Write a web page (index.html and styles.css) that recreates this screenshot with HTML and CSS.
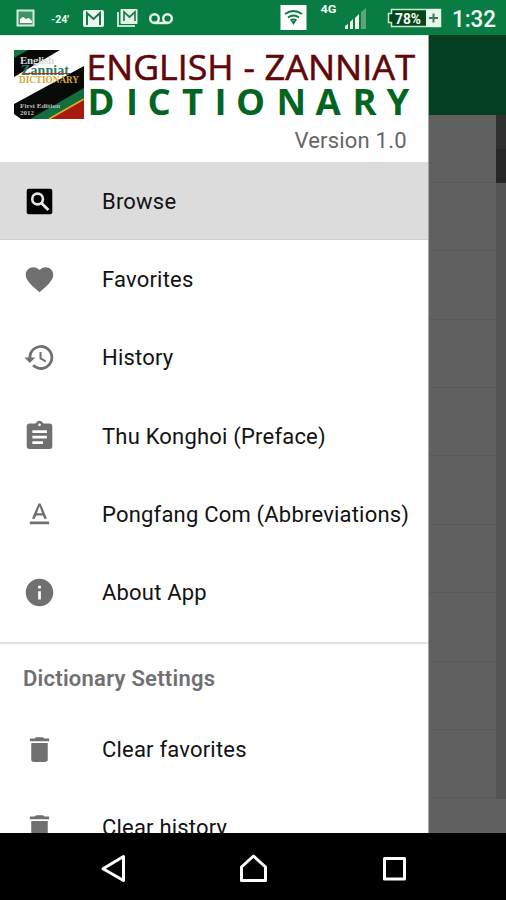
FILE: index.html
```html
<!DOCTYPE html>
<html lang="en">
<head>
<meta charset="utf-8">
<title>English - Zanniat Dictionary</title>
<link rel="stylesheet" href="styles.css">
</head>
<body>
<div class="phone">
  <header class="status">
    <svg class="notifications" viewBox="0 0 180 35" width="180" height="35">
      <rect x="17.5" y="10.500" width="16" height="15" fill="#3d9461" stroke="#d4ead9" stroke-width="2"/>
      <path d="M20 23v-4l3-2 3 2 3-1 3 3v2z" fill="#fff"/>
      <text x="51" y="22.5" class="temp" textLength="18" lengthAdjust="spacingAndGlyphs">-24'</text>
      <rect x="83" y="10" width="21" height="17" rx="2" fill="#e9f7ec"/>
      <path d="M87 25V13l6.500 6L100 13v12" fill="none" stroke="#16794a" stroke-width="2"/>
      <path d="M118 12v14h17" fill="none" stroke="#c1e3cb" stroke-width="2"/>
      <rect x="120.500" y="9" width="17" height="15" rx="1" fill="#e2f4e6"/>
      <path d="M124 21v-9l5.500 5 5.500-5v9" fill="none" stroke="#277d50" stroke-width="1.700"/>
      <g fill="none" stroke="#e4f5e8" stroke-width="2.400"><circle cx="154.500" cy="18.500" r="4.300"/><circle cx="167.500" cy="18.500" r="4.300"/><path d="M154 23h14"/></g>
    </svg>
    <svg class="indicators" viewBox="270 0 236 35" width="236" height="35">
      <rect x="280.500" y="5" width="26" height="25" fill="#fff"/>
      <g fill="none" stroke="#087c43" stroke-width="1.900"><path d="M285 14q8.500-6 17 0M288 17.500q5.500-4 11 0M290.500 20.500q3-2 6 0"/></g>
      <path d="M291 21h5l-2.500 4z" fill="#087c43"/>
      <text x="320.500" y="12.500" class="net" textLength="16" lengthAdjust="spacingAndGlyphs">4G</text>
      <path d="M345 29v-3l3-2v5zm5 0v-7l3-3v10zm5 0V18l4-4v15z" fill="#effbf1"/>
      <path d="M361 29V12l5-4v21z" fill="#59a778"/>
      <path d="M391.500 9.500h49v17h-49v-4h-3v-9h3z" fill="#07461d" stroke="#c9e8cc" stroke-width="1.500"/>
      <path d="M426 9h15v18h-15z" fill="#e7f7e9"/>
      <path d="M433.500 13.500v9M429 18h9" stroke="#397b52" stroke-width="2"/>
      <text x="395" y="23.500" class="battery" textLength="26" lengthAdjust="spacingAndGlyphs">78%</text>
      <text x="452" y="26.500" class="clock" textLength="44" lengthAdjust="spacingAndGlyphs">1:32</text>
    </svg>
  </header>

  <main class="screen">
    <nav class="drawer">
      <div class="brand">
        <svg viewBox="0 0 428 126" width="428" height="126">
          <g class="cover">
            <path fill="#fff" d="M14 15h70v69H14z"/>
            <path fill="#080a08" d="M14 15h46L14 42z"/>
            <path fill="#12783e" d="M14 15h14L14 23z"/>
            <path fill="#126d3f" d="M14 84l70-38v38z"/>
            <path fill="#080a08" d="M14 69l70-38v25L33 84H14z"/>
            <path fill="#fff" d="M14 79v5h7z"/>
            <path fill="#126d3f" d="M30 84l54-31v14L50 84z"/>
            <path fill="#a81910" d="M49 84l35-20v20z"/>
            <path fill="none" stroke="#e2ae25" stroke-width="1.500" d="M49 84l35-20"/>
            <text x="20" y="29" class="cover-old" textLength="34">English</text>
            <text x="21" y="39.500" class="cover-zanniat" textLength="48">Zanniat</text>
            <path d="M22 38.500h48" stroke="#ad3229" stroke-width="1"/>
            <text x="19" y="47.500" class="cover-dict" textLength="60" lengthAdjust="spacingAndGlyphs">DICTIONARY</text>
            <text x="20" y="73" class="cover-small" textLength="40" lengthAdjust="spacingAndGlyphs">First Edition</text>
            <text x="20" y="79.500" class="cover-small" textLength="14" lengthAdjust="spacingAndGlyphs">2012</text>
          </g>
          <text x="86.500" y="45" class="title" textLength="147" lengthAdjust="spacingAndGlyphs">ENGLISH</text>
          <text x="243.500" y="45" class="title">-</text>
          <text x="264.500" y="45" class="title" textLength="150.500" lengthAdjust="spacingAndGlyphs">ZANNIAT</text>
          <text y="79.500" class="subtitle"><tspan x="87.500 126 147.500 182 214.500 236 276.500 315.500 352.500 386.500">DICTIONARY</tspan></text>
          <text x="294.500" y="112.500" class="version" textLength="112">Version 1.0</text>
        </svg>
      </div>

      <ul class="menu">
        <li class="item selected">
          <svg class="icon" viewBox="0 0 24 24"><rect x="2.700" y="2.700" width="18.600" height="18.600" rx="1.500" fill="#000"/><circle cx="10.600" cy="10.200" r="3.900" fill="none" stroke="#e6e6e6" stroke-width="1.900"/><path d="M13.500 13.200l5 5" stroke="#e6e6e6" stroke-width="2.100"/></svg>
          <span>Browse</span>
        </li>
        <li class="item">
          <svg class="icon" viewBox="0 0 24 24"><path d="M12 21.350l-1.450-1.320C5.400 15.360 2 12.280 2 8.500 2 5.420 4.420 3 7.500 3c1.740 0 3.410.810 4.500 2.090C13.090 3.810 14.760 3 16.500 3 19.580 3 22 5.420 22 8.500c0 3.780-3.400 6.860-8.550 11.540L12 21.350z"/></svg>
          <span>Favorites</span>
        </li>
        <li class="item">
          <svg class="icon" viewBox="0 0 24 24"><path d="M13 3a9 9 0 0 0-9 9H1l3.890 3.890.07.140L9 12H6a7 7 0 1 1 2.060 4.940l-1.420 1.420A9 9 0 1 0 13 3zm-1 5v5l4.280 2.540.720-1.210-3.500-2.080V8H12z"/></svg>
          <span>History</span>
        </li>
        <li class="item">
          <svg class="icon" viewBox="0 0 24 24"><path transform="translate(0 -.5)" d="M19.300 3h-4.480a3 3 0 0 0-5.640 0H4.700a2 2 0 0 0-2 2v14.500a2 2 0 0 0 2 2h14.600a2 2 0 0 0 2-2V5a2 2 0 0 0-2-2zM12 3a1 1 0 1 1 0 2 1 1 0 0 1 0-2zm2.500 15H6.800v-2h7.700v2zm2.900-4H6.800v-2h10.600v2zm0-4H6.800V8h10.600v2z"/></svg>
          <span>Thu Konghoi (Preface)</span>
        </li>
        <li class="item">
          <svg class="icon" viewBox="0 0 24 24"><path d="M5 17v2h14v-2H5zm4.500-4.200h5l.9 2.200h2.100L12.750 4h-1.500L6.500 15h2.100l.9-2.200zM12 5.980L13.870 11h-3.740L12 5.980z"/></svg>
          <span>Pongfang Com (Abbreviations)</span>
        </li>
        <li class="item">
          <svg class="icon" viewBox="0 0 24 24"><path d="M12 2a10 10 0 1 0 0 20 10 10 0 0 0 0-20zm1 15h-2v-6h2v6zm0-8h-2V7h2v2z"/></svg>
          <span>About App</span>
        </li>
      </ul>
      <h2 class="section">Dictionary Settings</h2>
      <ul class="menu settings">
        <li class="item">
          <svg class="icon" viewBox="0 0 24 24"><path d="M6 19.500c0 1.100.9 1.500 2 1.500h8c1.100 0 2-.4 2-1.500V7.300H6v12.200zM19 4h-3.500l-1-1h-5l-1 1H5v2h14V4z"/></svg>
          <span>Clear favorites</span>
        </li>
        <li class="item">
          <svg class="icon" viewBox="0 0 24 24"><path d="M6 19.500c0 1.100.9 1.500 2 1.500h8c1.100 0 2-.4 2-1.500V7.300H6v12.200zM19 4h-3.500l-1-1h-5l-1 1H5v2h14V4z"/></svg>
          <span>Clear history</span>
        </li>
      </ul>
    </nav>

    <div class="behind">
      <div class="appbar"></div>
      <div class="content">
        <div class="list"><i></i><i></i><i></i><i></i><i></i><i></i><i></i><i></i><i></i><i></i></div>
        <div class="scroll"><div class="thumb"></div></div>
      </div>
      <div class="rest"></div>
    </div>
  </main>

  <footer class="navbar">
    <svg viewBox="0 0 506 67" width="506" height="67" fill="none" stroke="#fff" stroke-width="3" stroke-linejoin="round">
      <path d="M123.500 23.500v24L103 35.800z"/>
      <path d="M241.500 47.500V34l12-11 12 11v13.500z"/>
      <rect x="384.500" y="25.500" width="20" height="20.500"/>
    </svg>
  </footer>
</div>
</body>
</html>
```

FILE: styles.css
```css
* { box-sizing: border-box; }
body { margin: 0; font-family: Roboto, "Liberation Sans", sans-serif; background: #000; }
svg { display: block; }
.phone { width: 506px; height: 900px; display: flex; flex-direction: column; overflow: hidden; }

.status { flex: 0 0 35px; display: flex; justify-content: space-between; background: #087c43; }
.status text { fill: #f2fcf4; }
.temp { font-size: 11px; font-weight: 700; }
.net { font-size: 11px; font-weight: 700; }
.battery { font-size: 15px; font-weight: 700; }
.clock { font-size: 24px; font-weight: 500; }

.screen { flex: 0 0 798px; display: flex; overflow: hidden; }
.drawer { flex: 0 0 429px; background: #fff; border-right: 1px solid #a5a5a5; }
.brand { height: 126.500px; border-top: 1px solid #d9f3e3; }
.brand svg { margin-top: -1px; }
.title { font: 400 35.500px "Open Sans", sans-serif; fill: #610609; stroke: #610609; stroke-width: .6px; }
.subtitle { font: 700 36.500px "Open Sans", sans-serif; fill: #046523; }
.version { font-size: 22px; fill: #666; }
.cover-old { font: 700 11px "Liberation Serif", serif; fill: #d8d8d8; }
.cover-zanniat { font: 700 14px "Liberation Serif", serif; fill: #287d63; }
.cover-dict { font: 700 10px "Liberation Serif", serif; fill: #d3a62c; }
.cover-small { font: 700 7px "Liberation Serif", serif; fill: #b9beb9; }

.menu { list-style: none; margin: 0; padding: 0 0 11px; border-bottom: 2px solid #e4e4e4; }
.item { height: 78.300px; display: flex; align-items: center; gap: 46px; padding: 1.500px 0 0 23px; font-size: 22px; letter-spacing: .2px; color: #121212; white-space: nowrap; }
.selected { padding-top: 2.500px; background: #dcdcdc; border-bottom: 1px solid #cfcfcf; }
.icon { width: 33px; height: 33px; fill: #707070; flex: none; }
.section { margin: 0; height: 65.500px; padding: 0 23px; line-height: 69px; font-size: 22px; font-weight: 600; letter-spacing: .25px; color: #707070; }
.settings { padding: 0; border: 0; }

.behind { flex: 1; display: flex; flex-direction: column; }
.appbar { height: 79.500px; background: #053f22; }
.content { height: 684px; display: flex; }
.list { flex: 1; background: #606060; }
.list i { display: block; height: 68.400px; border-bottom: 1px solid #585858; }
.scroll { width: 10px; background: #545454; }
.thumb { height: 68px; background: linear-gradient(#303030 50%, #272727 50%); }
.rest { flex: 1; background: #606060; }
.navbar { flex: 0 0 67px; background: #000; }
```
